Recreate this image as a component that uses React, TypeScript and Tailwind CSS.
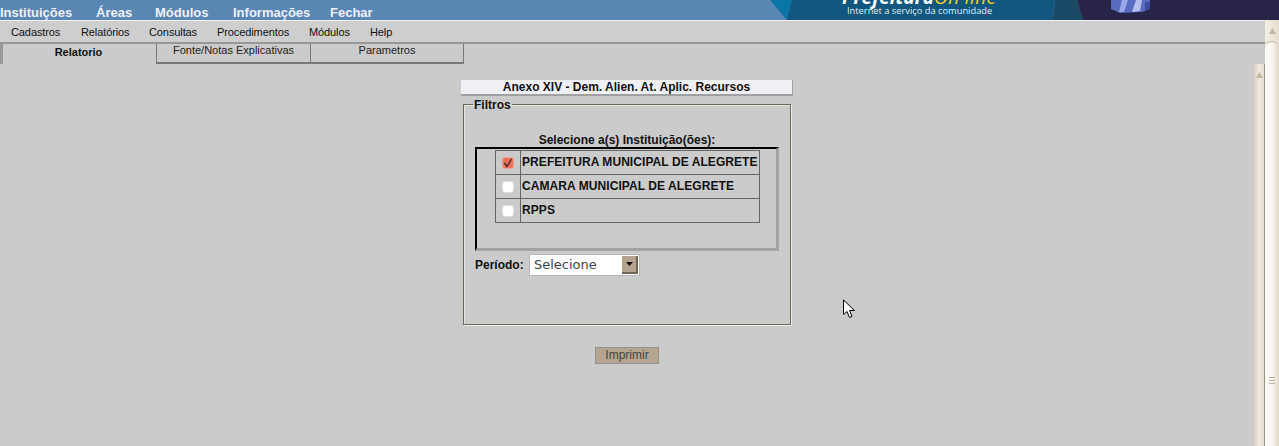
import React from 'react';

const topMenu = [
    { label: 'Instituições', width: 'w-[96px]' },
    { label: 'Áreas', width: 'w-[59px]' },
    { label: 'Módulos', width: 'w-[78px]' },
    { label: 'Informações', width: 'w-[97px]' },
    { label: 'Fechar', width: 'w-[60px]' },
];

const subMenu = [
    { label: 'Cadastros', width: 'w-[70px]' },
    { label: 'Relatórios', width: 'w-[68px]' },
    { label: 'Consultas', width: 'w-[68px]' },
    { label: 'Procedimentos', width: 'w-[92px]' },
    { label: 'Módulos', width: 'w-[61px]' },
    { label: 'Help', width: 'w-[40px]' },
];

const institutions = [
    { name: 'PREFEITURA MUNICIPAL DE ALEGRETE', checked: true },
    { name: 'CAMARA MUNICIPAL DE ALEGRETE', checked: false },
    { name: 'RPPS', checked: false },
];

const Banner = () => (
    <div className="relative w-[509px] h-[20px] overflow-hidden shrink-0">
        <svg className="absolute inset-0" width="509" height="20" viewBox="0 0 509 20">
            <polygon points="0,0 22,0 18,20 17,20" fill="#0a76a6" />
            <polygon points="22,0 285,0 283,20 17,20" fill="#11577f" />
            <polygon points="285,0 307,0 313,20 283,20" fill="#1b4a66" />
            <polygon points="307,0 509,0 509,20 313,20" fill="#272448" />
            <polygon points="341,0 380,0 379,9 372,12 350,13 341,9" fill="#5a6cc0" />
            <polygon points="352,0 358,0 354,12 349,12" fill="#9aa8e8" />
            <polygon points="366,0 372,0 370,11 362,12" fill="#b4c0f0" />
            <polygon points="375,2 380,2 380,9 375,11" fill="#3e4c9c" />
        </svg>
        <div className="absolute left-[72px] top-[-14px] text-[19px] leading-[22px] font-bold italic text-white font-['Open_Sans',sans-serif] whitespace-nowrap">
            Prefeitura<span className="font-normal text-[#f0d21e] tracking-[0.4px]">On line</span>
        </div>
        <div className="absolute left-[77px] top-[4px] text-[9.3px] leading-[14px] text-[#e4edf2] font-['Open_Sans',sans-serif] whitespace-nowrap">
            Internet a serviço da comunidade
        </div>
    </div>
);

const ArrowUp = () => (
    <svg width="7" height="6" viewBox="0 0 7 6">
        <polygon points="3.5,0 7,6 0,6" fill="#c4b8a2" />
    </svg>
);

const Checkbox = ({ checked }: { checked: boolean }) =>
    checked ? (
        <span className="flex items-center justify-center w-[12px] h-[12px] rounded-[3px] bg-[#ee6f5c] border border-[#e8a595]">
            <svg width="10" height="10" viewBox="0 0 10 10">
                <path d="M1.5 5 L4 8.5 L8.5 1" fill="none" stroke="#4a2a28" strokeWidth="1.4" />
            </svg>
        </span>
    ) : (
        <span className="block w-[12px] h-[12px] rounded-[3px] bg-white border border-[#e2ddd4]" />
    );

const App: React.FC = () => {
    return (
        <div className="relative h-[446px] w-[1279px] overflow-hidden bg-[#cbcbcb] font-['Liberation_Sans',Arial,sans-serif] text-black">
            {/* Top bar */}
            <div className="flex h-[20px] bg-[#5a86b4] justify-between">
                <div className="flex">
                    {topMenu.map(item => (
                        <div key={item.label} className={`${item.width} text-[13px] font-bold leading-[25px] h-[20px] text-[#eef2f6] whitespace-nowrap`}>
                            {item.label}
                        </div>
                    ))}
                </div>
                <Banner />
            </div>

            <div className="flex h-[426px]">
                <div className="flex-1 flex flex-col min-w-0">
                    {/* Sub menu */}
                    <div className="flex h-[24px] pl-[11px] bg-[#cecece] border-t border-[#f2f2f2] border-b-2 border-b-[#989898] text-[11px] tracking-[-0.1px] leading-[22px] text-[#111]">
                        {subMenu.map(item => (
                            <div key={item.label} className={`${item.width} whitespace-nowrap`}>{item.label}</div>
                        ))}
                    </div>

                    {/* Tabs */}
                    <div className="flex h-[20px] text-[11px] shrink-0">
                        <div className="w-[156px] pl-[2px] border-l-[3px] border-[#9a9a9a] h-[20px] text-center font-bold leading-[15px] pt-px pr-[4px] text-[#111]">Relatorio</div>
                        <div className="w-[154px] border-l border-b-2 border-[#777] text-center leading-[13px] text-[#222]">Fonte/Notas Explicativas</div>
                        <div className="w-[154px] border-l border-r border-b-2 border-[#777] text-center leading-[13px] text-[#222]">Parametros</div>
                    </div>

                    <div className="flex flex-1 min-h-0">
                        <main className="flex-1 flex flex-col items-center pt-[16px]">
                            <div className="w-[332px] h-[16px] bg-[#eef0f5] border-r border-b-2 border-[#a0a0a0] text-center text-[12px] font-bold leading-[15px] text-[#111]">
                                Anexo XIV - Dem. Alien. At. Aplic. Recursos
                            </div>

                            <fieldset className="w-[328px] h-[229px] border border-[#6e6656] shadow-[1px_1px_0_#f0f0f0,inset_1px_1px_0_#e4e4e4] px-[11px]">
                                <legend className="-ml-[2px] px-px pt-[2px] text-[12px] font-bold leading-[14px] text-[#111]">Filtros</legend>
                                <p className="mt-[21px] mb-0 text-center text-[12px] font-bold leading-[14px] text-[#111]">Selecione a(s) Instituição(ões):</p>
                                <div className="w-[304px] h-[104px] border-t-2 border-l-2 border-black border-r-[3px] border-r-[#a2a2a2] border-b-[3px] border-b-[#a2a2a2] pl-[18px] pt-px">
                                    <table className="border-collapse text-[12px] font-bold tracking-[0.07px] text-[#111]">
                                        <tbody>
                                            {institutions.map(inst => (
                                                <tr key={inst.name} className="h-[24px]">
                                                    <td className="w-[25px] p-0 border border-[#666]">
                                                        <div className="flex justify-center">
                                                            <Checkbox checked={inst.checked} />
                                                        </div>
                                                    </td>
                                                    <td className="w-[239px] p-0 pl-px pb-[2px] border border-[#666] whitespace-nowrap">{inst.name}</td>
                                                </tr>
                                            ))}
                                        </tbody>
                                    </table>
                                </div>
                                <div className="flex items-center mt-[3px] h-[22px]">
                                    <span className="w-[54px] text-[12px] font-bold text-[#111]">Período:</span>
                                    <div className="flex w-[111px] h-[22px] bg-white border border-[#b8b8b8]">
                                        <span className="flex-1 pl-[4px] text-[13px] leading-[19px] text-[#444] font-['DejaVu_Sans',sans-serif]">Selecione</span>
                                        <span className="flex items-center justify-center w-[16px] my-px mr-px bg-[#b5a58f] border-r-2 border-b-2 border-[#6e6656]">
                                            <svg width="7" height="4" viewBox="0 0 7 4">
                                                <polygon points="0,0 7,0 3.5,4" fill="#111" />
                                            </svg>
                                        </span>
                                    </div>
                                </div>
                            </fieldset>

                            <button className="mt-[22px] w-[64px] h-[17px] bg-[#b5a58f] border border-[#919191] text-[12px] leading-[15px] text-[#444] font-['Liberation_Sans',sans-serif]">
                                Imprimir
                            </button>
                        </main>

                        {/* Inner scrollbar */}
                        <div className="w-[11px] shrink-0 flex flex-col bg-gradient-to-r from-[#d8cfc0] via-[#f0ebe2] to-[#e6dfd2] border-r border-[#9e9482]">
                            <div className="flex justify-center pt-[8px]">
                                <ArrowUp />
                            </div>
                        </div>
                    </div>
                </div>

                {/* Outer scrollbar */}
                <div className="relative w-[14px] shrink-0 flex flex-col bg-[#ece6da]">
                    <div className="flex justify-center pt-[8px] h-[21px] bg-gradient-to-r from-[#f4f0e6] to-[#e4dccb] rounded-t-[3px]">
                        <ArrowUp />
                    </div>
                    <div className="flex-1 flex flex-col items-center justify-end pb-[62px] gap-[2px] rounded-t-[7px] border-t border-[#bcb19c] bg-gradient-to-r from-[#fdfdfb] via-[#f8f6f0] to-[#e0d8c8]">
                        <span className="block w-[6px] h-px bg-[#bcb19c]" />
                        <span className="block w-[6px] h-px bg-[#bcb19c]" />
                        <span className="block w-[6px] h-px bg-[#bcb19c]" />
                    </div>
                </div>
            </div>

            {/* Mouse pointer */}
            <svg className="absolute left-[842px] top-[299px]" width="15" height="21" viewBox="0 0 15 21">
                <path d="M1.5 1 L1.5 15.5 L5 12.5 L7.5 18.5 L10 17.5 L7.5 11.5 L12.5 11.5 Z" fill="#fff" stroke="#000" strokeWidth="1" />
            </svg>
        </div>
    );
};

export default App;
